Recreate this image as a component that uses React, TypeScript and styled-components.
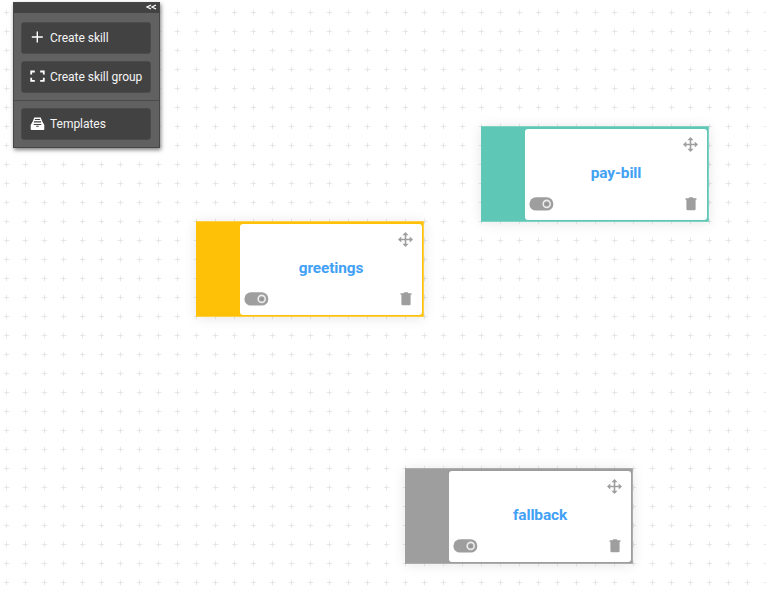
import React from "react";
import styled, { createGlobalStyle } from "styled-components";

const GlobalStyle = createGlobalStyle`
  * { box-sizing: border-box; }
  body { margin: 0; background: #fff; font-family: Roboto, "Liberation Sans", sans-serif; }
`;

const Canvas = styled.main`
  position: relative;
  width: 100%;
  height: 100vh;
  overflow: hidden;
  background:
    radial-gradient(ellipse 3.8px 1px at 6.5px 12.5px, #e6e6e6 40%, transparent 100%) 0 0 / 19px 19px,
    radial-gradient(ellipse 1px 3.8px at 6.5px 12.5px, #e6e6e6 40%, transparent 100%) 0 0 / 19px 19px,
    #fff;
`;

const Palette = styled.aside`
  position: absolute;
  left: 13px;
  top: 2px;
  width: 147px;
  height: 146px;
  display: flex;
  flex-direction: column;
  border: 1px solid #464646;
  background: #616161;
  box-shadow: 1px 2px 4px rgba(0, 0, 0, 0.5);
`;

const PaletteBar = styled.header`
  display: flex;
  justify-content: flex-end;
  align-items: center;
  height: 11px;
  padding: 0 2px 2px 0;
  background: #424242;
`;

const PaletteGroup = styled.div<{ $divided?: boolean }>`
  display: flex;
  flex-direction: column;
  gap: 7px;
  padding: ${(p) => (p.$divided ? "7px" : "9px")} 8px 7px 7px;
  border-top: ${(p) => (p.$divided ? "1px solid #4a4a4a" : "none")};
`;

const PaletteButton = styled.button`
  display: flex;
  align-items: center;
  gap: 5px;
  height: 32px;
  padding: 0 0 1px 8px;
  border: 1px solid #4b4b4b;
  border-radius: 3px;
  background: #424242;
  color: #f5f5f5;
  font: 400 12px Roboto, "Liberation Sans", sans-serif;
  letter-spacing: -0.03px;
  white-space: nowrap;
  svg { flex: none; }
`;

const Node = styled.article<{ $x: number; $y: number; $color: string; $edge: string }>`
  position: absolute;
  left: ${(p) => p.$x}px;
  top: ${(p) => p.$y}px;
  width: 228px;
  padding: 2px 1px 1px 43px;
  border: 1px solid ${(p) => p.$edge};
  border-left-color: ${(p) => p.$color};
  background: ${(p) => p.$color};
  box-shadow: 0 1px 12px rgba(0, 0, 0, 0.1);
`;

const NodeBody = styled.div`
  display: grid;
  grid-template-rows: 30px 1fr 30px;
  height: 91px;
  border-radius: 3px;
  background: #fff;
`;

const NodeRow = styled.div<{ $between?: boolean }>`
  display: flex;
  align-items: center;
  justify-content: ${(p) => (p.$between ? "space-between" : "flex-end")};
  padding: ${(p) => (p.$between ? "0 10px 2px 4px" : "0 9px 0 0")};
`;

const NodeTitle = styled.h2`
  display: flex;
  align-items: center;
  justify-content: center;
  margin: 0;
  padding-bottom: 3px;
  color: #42a1f5;
  font-size: 15.4px;
  font-weight: 700;
  line-height: 18px;
  letter-spacing: -0.12px;
`;

const CollapseIcon = () => (
  <svg width="12" height="6" viewBox="0 0 12 6" fill="none" stroke="#fff" strokeWidth="1.3">
    <path d="M6 1 2 3l4 2M11 1 7 3l4 2" />
  </svg>
);

const PlusIcon = () => (
  <svg width="15" height="14" viewBox="0 0 15 14" fill="none" stroke="#fff" strokeWidth="1.4">
    <path d="M7.3 .5v11M1.8 6h11" />
  </svg>
);

const GroupIcon = () => (
  <svg width="15" height="14" viewBox="0 0 15 14" fill="none" stroke="#fff" strokeWidth="1.8">
    <path d="M1.2 4.6V1.5h3.6M10.2 1.5h3.6v3.1M13.8 7.7v3.1h-3.6M4.8 10.8H1.2V7.7" />
  </svg>
);

const TemplatesIcon = () => (
  <svg width="15" height="14" viewBox="0 0 15 14">
    <path fill="#fff" d="M4.3.4h6.4l1.6 4L14.3 8v4.3q0 .8-.8.8h-12q-.8 0-.8-.8V8l2-3.6z" />
    <path fill="none" stroke="#424242" strokeWidth="1.1" d="M4.9 2.5h5.2M3.9 4.9h7.2M3.7 7.5h7.6M6.2 9.3h2.6" />
  </svg>
);

const MoveIcon = () => (
  <svg width="15" height="15" viewBox="0 0 15 15" fill="#9e9e9e">
    <path d="M7.5 0 10.6 3.3H4.4zM7.5 15l3.1-3.3H4.4zM0 7.5l3.3-3.1v6.2zM15 7.5l-3.3-3.1v6.2z" />
    <path d="M6.7 2.5h1.6v10H6.7zM2.5 6.7h10v1.6h-10z" />
  </svg>
);

const ToggleIcon = () => (
  <svg width="25" height="14" viewBox="0 0 25 14">
    <rect x=".4" y=".2" width="24" height="13.4" rx="6.7" fill="#9e9e9e" />
    <circle cx="17.7" cy="6.9" r="3.5" fill="#9e9e9e" stroke="#ececec" strokeWidth="1.6" />
    <circle cx="17.7" cy="6.9" r="1" fill="#8c8c8c" />
  </svg>
);

const TrashIcon = () => (
  <svg width="12" height="14" viewBox="0 0 12 14" fill="#9e9e9e">
    <path d="M.5 1.2h3L4.3.3h3.4l.8.9h3v1.6H.5zM1.4 2.7h9.2v9.4q0 1.2-1.2 1.2H2.6q-1.2 0-1.2-1.2z" />
  </svg>
);

const skills = [
  { name: "pay-bill", x: 481, y: 126, color: "#5ec7b5", edge: "#7dd2c3" },
  { name: "greetings", x: 196, y: 221, color: "#ffc107", edge: "#ffcf45" },
  { name: "fallback", x: 405, y: 468, color: "#9e9e9e", edge: "#adadad" },
];

export default function App() {
  return (
    <>
      <GlobalStyle />
      <Canvas>
        {skills.map((s) => (
          <Node key={s.name} $x={s.x} $y={s.y} $color={s.color} $edge={s.edge}>
            <NodeBody>
              <NodeRow><MoveIcon /></NodeRow>
              <NodeTitle>{s.name}</NodeTitle>
              <NodeRow $between><ToggleIcon /><TrashIcon /></NodeRow>
            </NodeBody>
          </Node>
        ))}
        <Palette>
          <PaletteBar><CollapseIcon /></PaletteBar>
          <PaletteGroup>
            <PaletteButton><PlusIcon />Create skill</PaletteButton>
            <PaletteButton><GroupIcon />Create skill group</PaletteButton>
          </PaletteGroup>
          <PaletteGroup $divided>
            <PaletteButton><TemplatesIcon />Templates</PaletteButton>
          </PaletteGroup>
        </Palette>
      </Canvas>
    </>
  );
}
